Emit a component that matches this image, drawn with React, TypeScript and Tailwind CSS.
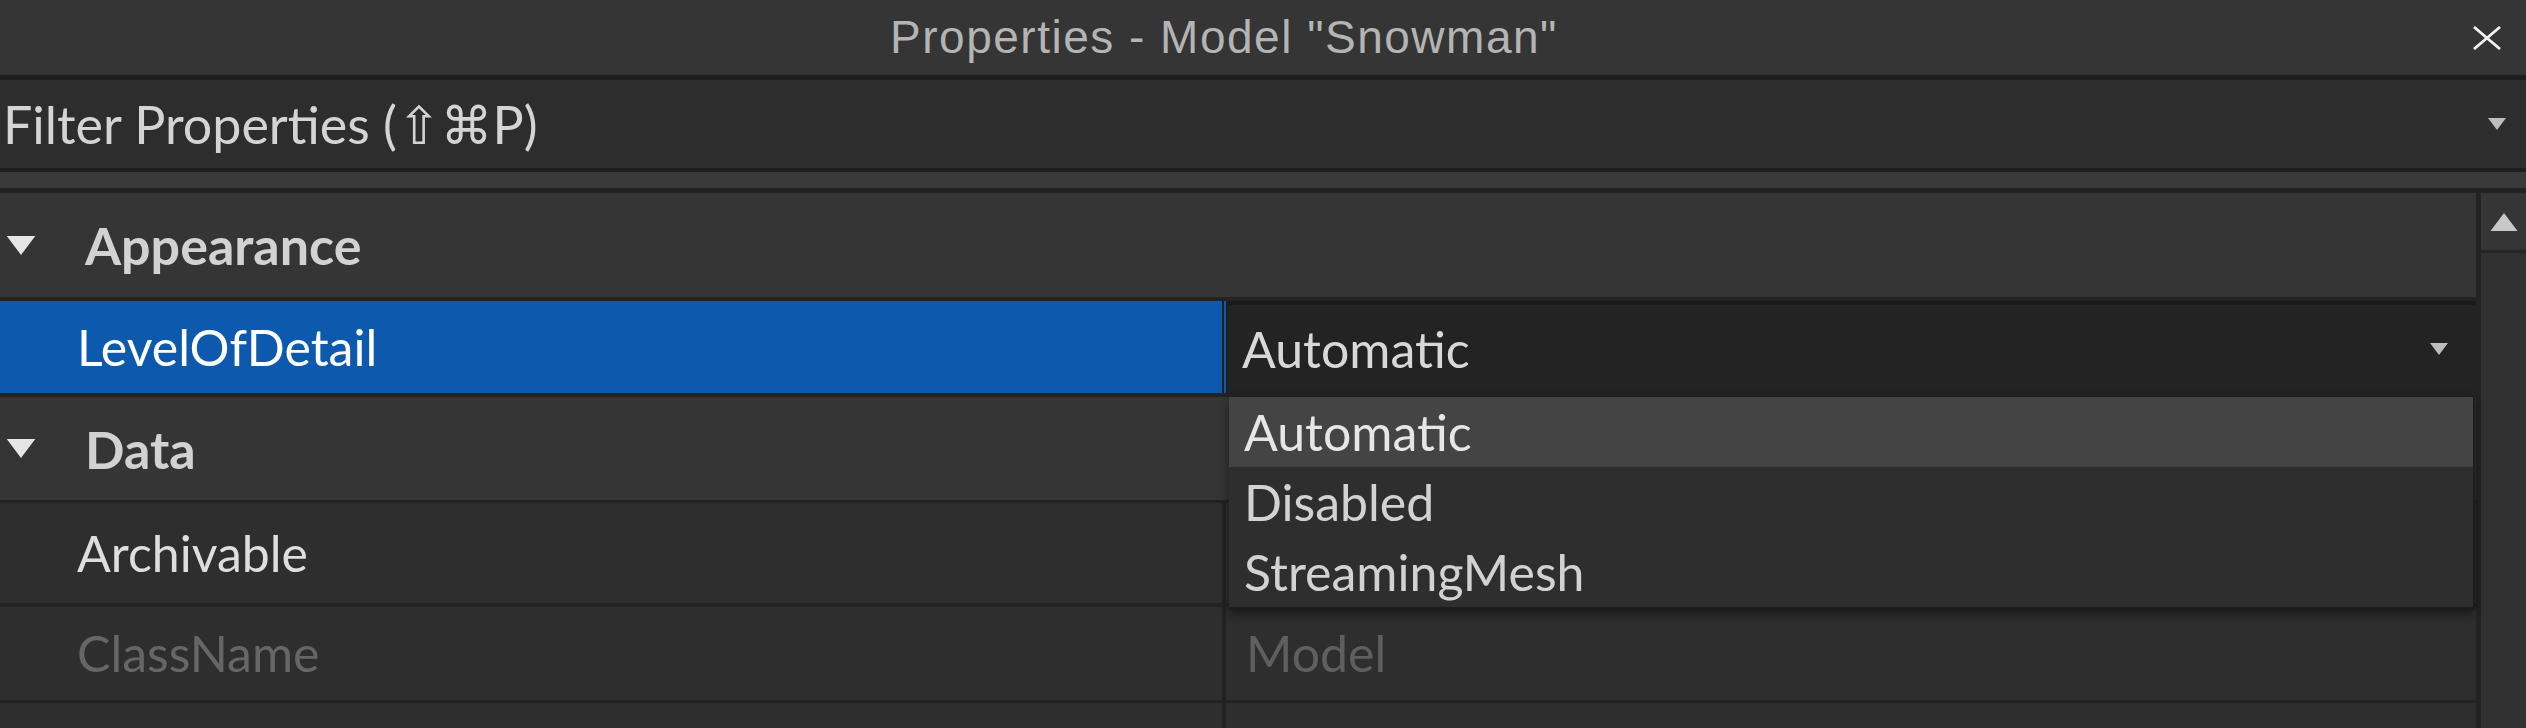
import React from 'react';

function Caret({ className }: { className?: string }) {
  return (
    <svg className={className} viewBox="0 0 18 12">
      <path d="M0 0 H18 L9 12 Z" fill="currentColor" />
    </svg>
  );
}

function PropRow({ name, value, dim, h }: { name: string; value?: string; dim?: boolean; h: string }) {
  return (
    <div className={`flex ${h} bg-[#2e2e2e]`}>
      <div className={`w-[1222px] flex items-center pl-[77px] text-[50px] ${dim ? 'text-[#666666]' : 'text-[#dedede]'}`}>
        {name}
      </div>
      <div className="w-[4px] bg-[#232323]" />
      <div className={`flex-1 flex items-center pl-[20px] text-[50px] ${dim ? 'text-[#5f5f5f]' : 'text-[#d8d8d8]'}`}>
        {value}
      </div>
    </div>
  );
}

function Section({ title, h }: { title: string; h: string }) {
  return (
    <div className={`flex items-center ${h} bg-[#353535]`}>
      <Caret className="w-[30px] h-[19px] ml-[6px] text-[#e6e6e6]" />
      <span className="ml-[49px] text-[52px] font-bold text-[#d2d2d2]">{title}</span>
    </div>
  );
}

export default function App() {
  return (
    <div className="w-[2526px] h-[728px] overflow-hidden flex flex-col bg-[#2b2b2b] font-['Lato','DejaVu_Sans',sans-serif] antialiased">
      {/* Title bar */}
      <div className="h-[75px] flex items-center bg-[#353535]">
        <div className="flex-1 text-center text-[46px] tracking-[1.5px] text-[#b4b4b4] font-['Liberation_Sans',sans-serif]">Properties - Model "Snowman"</div>
        <div className="w-[78px] flex items-center justify-center">
          <svg className="w-[28px] h-[24px]" viewBox="0 0 28 24">
            <path d="M1 1 L27 23 M27 1 L1 23" stroke="#f2f2f2" strokeWidth="2.8" fill="none" />
          </svg>
        </div>
      </div>
      <div className="h-[5px] bg-[#1f1f1f]" />

      {/* Filter */}
      <div className="h-[88px] flex items-center justify-between pl-[3px] pr-[20px] bg-[#2d2d2d]">
        <span className="text-[52px] text-[#d4d4d4]">Filter Properties (⇧⌘P)</span>
        <Caret className="w-[18px] h-[12px] text-[#bdbdbd]" />
      </div>
      <div className="h-[4px] bg-[#1f1f1f]" />
      <div className="h-[16px] bg-[#3a3a3a]" />
      <div className="h-[5px] bg-[#222222]" />

      {/* Body */}
      <div className="flex-1 flex">
        <div className="w-[2476px] relative flex flex-col">
          <Section title="Appearance" h="h-[104px]" />
          <div className="h-[4px] bg-[#232323]" />

          <div className="flex h-[92px]">
            <div className="w-[1222px] flex items-center pl-[77px] bg-[#0c59ae] text-[50px] text-white">LevelOfDetail</div>
            <div className="w-[2px] bg-[#1e1e1e]" />
            <div className="w-[2px] bg-[#0c59ae]" />
            <div className="w-[2px] bg-[#1e1e1e]" />
            <div className="flex-1 flex items-center justify-between pl-[14px] pr-[28px] bg-[#232323] border-t-[4px] border-[#1b1b1b]">
              <span className="text-[50px] text-[#d8d8d8]">Automatic</span>
              <Caret className="w-[18px] h-[12px] text-[#bdbdbd]" />
            </div>
          </div>
          <div className="h-[4px] bg-[#232323]" />

          <Section title="Data" h="h-[103px]" />
          <div className="h-[3px] bg-[#232323]" />
          <PropRow name="Archivable" h="h-[100px]" />
          <div className="h-[4px] bg-[#232323]" />
          <PropRow name="ClassName" value="Model" dim h="h-[93px]" />
          <div className="h-[3px] bg-[#232323]" />
          <PropRow name="" h="flex-1" />

          {/* Open dropdown list */}
          <div className="absolute left-[1229px] top-[204px] w-[1246px] flex flex-col bg-[#2e2e2e] border-b-[3px] border-r-[2px] border-[#1c1c1c] shadow-[0_4px_10px_rgba(0,0,0,0.45)]">
            <div className="h-[70px] flex items-center pl-[15px] bg-[#444444] text-[50px] text-[#e6e6e6]">Automatic</div>
            <div className="h-[70px] flex items-center pl-[15px] text-[50px] text-[#d2d2d2]">Disabled</div>
            <div className="h-[70px] flex items-center pl-[15px] text-[50px] text-[#d2d2d2]">StreamingMesh</div>
          </div>
        </div>

        <div className="w-[5px] bg-[#232323]" />

        {/* Scrollbar */}
        <div className="flex-1 flex flex-col bg-[#333333]">
          <div className="h-[57px] flex items-center justify-center bg-[#353535]">
            <Caret className="w-[28px] h-[18px] rotate-180 text-[#c8c8c8]" />
          </div>
          <div className="h-[3px] bg-[#252525]" />
          <div className="flex-1 bg-[#313131]" />
        </div>
      </div>
    </div>
  );
}
